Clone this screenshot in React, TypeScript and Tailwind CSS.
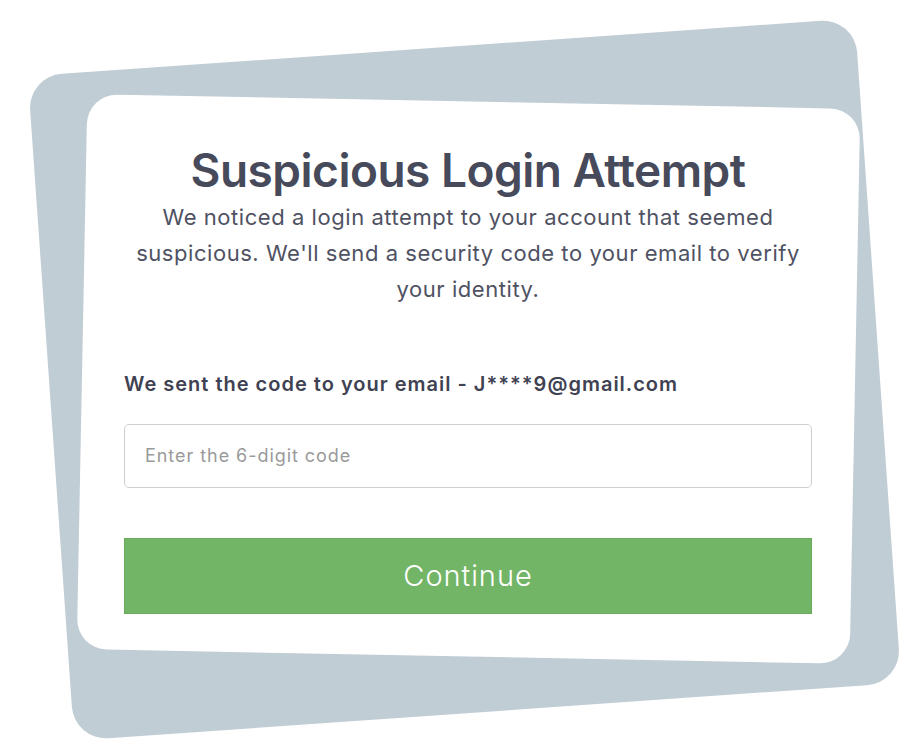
import React from 'react';

function App() {
  return (
    <div
      className="grid h-[743px] w-[920px] place-items-center overflow-hidden bg-white pt-[14px]"
      style={{ fontFamily: 'Inter, "Open Sans", sans-serif' }}
    >
      {/* tilted backdrop cards */}
      <div className="[grid-area:1/1] h-[666px] w-[829px] translate-x-[4px] translate-y-[0.5px] -rotate-4 rounded-[34px] bg-[#c1cdd5]" />
      <div className="[grid-area:1/1] h-[555px] w-[773px] translate-x-[8px] translate-y-[0.5px] rotate-[1.1deg] rounded-[30px] bg-white" />

      <div className="[grid-area:1/1] flex w-[688px] translate-x-[8px] flex-col items-center">
        <h1 className="text-[46px] leading-[52px] font-semibold tracking-[-0.5px] text-[#464a5b]">
          Suspicious Login Attempt
        </h1>
        <p className="mt-[3px] w-[672px] text-center text-[22px] leading-[36px] tracking-[0.55px] text-[#4f5263]">
          We noticed a login attempt to your account that seemed suspicious. We'll send a security code to your
          email to verify your identity.
        </p>

        <div className="mt-[62px] w-full text-[20px] font-semibold tracking-[1px] text-[#3f4252]">
          We sent the code to your email - J****9@gmail.com
        </div>
        <input
          type="text"
          placeholder="Enter the 6-digit code"
          className="mt-[25px] h-[64px] w-full rounded-[5px] border border-[#cfcfcf] px-[20px] text-[18px] tracking-[0.95px] text-[#444] placeholder:text-[#9a9a9a] focus:outline-none"
        />
        <button
          type="button"
          className="mt-[50px] h-[76px] w-full border border-[#67ab5b] bg-[#73b567] text-[29px] font-light tracking-[0.95px] text-white"
        >
          Continue
        </button>
      </div>
    </div>
  );
}

export default App;
